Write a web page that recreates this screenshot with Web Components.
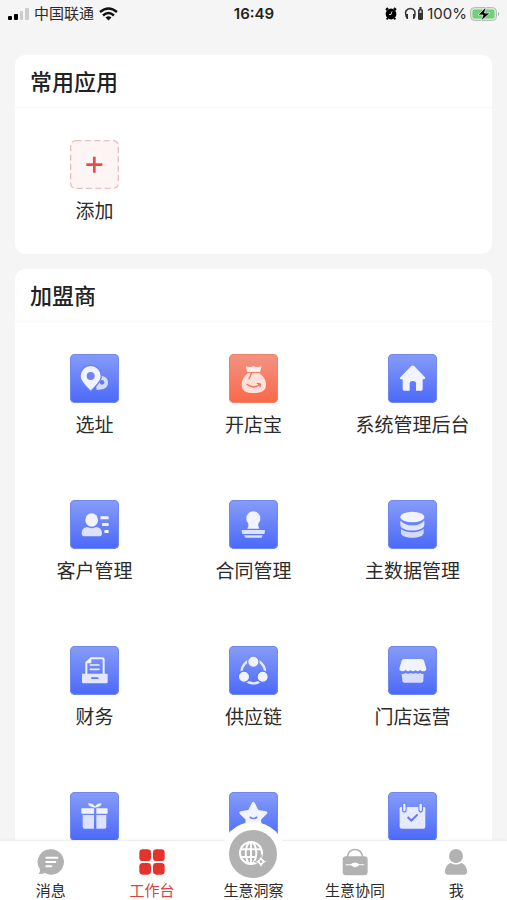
<!DOCTYPE html>
<html lang="zh-CN">
<head>
<meta charset="utf-8">
<meta name="viewport" content="width=device-width, initial-scale=1">
<title>工作台</title>
<style>
    html, body {
        height: 100%;
        margin: 0;
    }
    body {
        background: #f5f5f5;
        color: #2b2b2b;
        font-family: "Noto Sans CJK SC", sans-serif;
    }
</style>
</head>
<body>
<wb-screen>
    <wb-status-bar slot="status" carrier="中国联通" time="16:49" battery="100%"></wb-status-bar>

    <wb-card heading="常用应用">
        <wb-app icon="add" label="添加"></wb-app>
    </wb-card>

    <wb-card heading="加盟商">
        <wb-app icon="site" label="选址"></wb-app>
        <wb-app icon="bag" label="开店宝" tone="coral"></wb-app>
        <wb-app icon="home" label="系统管理后台"></wb-app>
        <wb-app icon="customer" label="客户管理"></wb-app>
        <wb-app icon="stamp" label="合同管理"></wb-app>
        <wb-app icon="data" label="主数据管理"></wb-app>
        <wb-app icon="finance" label="财务"></wb-app>
        <wb-app icon="chain" label="供应链"></wb-app>
        <wb-app icon="store" label="门店运营"></wb-app>
        <wb-app icon="gift"></wb-app>
        <wb-app icon="star"></wb-app>
        <wb-app icon="calendar"></wb-app>
    </wb-card>

    <wb-tab-bar slot="tabs">
        <wb-tab icon="message" label="消息"></wb-tab>
        <wb-tab icon="grid" label="工作台" active></wb-tab>
        <wb-tab icon="globe" label="生意洞察" raised></wb-tab>
        <wb-tab icon="work" label="生意协同"></wb-tab>
        <wb-tab icon="user" label="我"></wb-tab>
    </wb-tab-bar>
</wb-screen>

<script>
// app glyphs, drawn on a 147 unit tile
const appIcons = {
    add: `
        <path d="M73 50V98M49 74H97" fill="none" stroke="#df4f4b" stroke-width="8"/>`,
    site: `
        <path d="M80 108L98 106C120 101 120 69 96 66C86 66 77 74 77 84Z" opacity=".8"/>
        <circle cx="96" cy="85" r="7" fill="#6179f3"/>
        <path d="M62 112C50 99 30 85 30 66A32 32 0 0 1 94 66C94 85 74 99 62 112Z" stroke="#6a80f4" stroke-width="4"/>
        <circle cx="62" cy="66" r="12" fill="#6f84f5"/>`,
    bag: `
        <path d="M50 37Q62 41 74 37Q86 41 98 37L93 54H55Z"/>
        <path d="M57 57H90C103 66 111 78 111 92C111 110 98 117 74 117C50 117 38 110 38 92C38 78 45 66 57 57Z" opacity=".88"/>
        <path d="M67 57Q65 67 60 74M54 91Q74 107 93 91M85 88L94 90L93 98" fill="none" stroke="#ef705b" stroke-width="4" stroke-linecap="round"/>`,
    home: `
        <path d="M69 37Q74 32 79 37L111 70Q114 75 108 76H104V106Q104 110 100 110H84V88Q84 81 74 81Q65 81 65 88V110H48Q44 110 44 106V76H39Q33 75 37 70Z"/>`,
    customer: `
        <ellipse cx="65" cy="60" rx="19" ry="20"/>
        <path d="M51 81Q65 88 79 81Q96 83 96 100Q96 109 89 109H42Q35 109 35 100Q35 83 51 81Z" opacity=".85"/>
        <rect x="91" y="49" width="25" height="9" rx="2"/>
        <rect x="96" y="69" width="20" height="9" rx="2"/>
        <rect x="103" y="90" width="13" height="9" rx="2"/>`,
    stamp: `
        <path d="M73 34A21 21 0 0 1 94 56C94 67 86 67 88 78L91 86H55L58 78C60 67 52 67 52 56A21 21 0 0 1 73 34Z"/>
        <path d="M41 90H105Q109 90 108 94L106 102H40L38 94Q37 90 41 90ZM45 106H101L98 113H49Z" opacity=".85"/>`,
    data: `
        <ellipse cx="73" cy="51" rx="36" ry="16"/>
        <path d="M37 62Q51 76 73 76T109 62V75C109 97 37 97 37 75Z" opacity=".88"/>
        <path d="M39 87Q53 97 73 97T107 87V99C107 118 39 118 39 99Z" opacity=".8"/>`,
    finance: `
        <path d="M49 84V50L63 37H96Q101 37 101 42V84" fill="none" stroke="#edf0ff" stroke-width="6"/>
        <path d="M49 52H64V37Z"/>
        <path d="M61 57H87M61 70H87" stroke="#edf0ff" stroke-width="5" stroke-linecap="round"/>
        <path d="M36 83H113V108Q113 112 109 112H40Q36 112 36 108Z" opacity=".9"/>
        <rect x="63" y="94" width="23" height="5" rx="2" fill="#6079f5"/>`,
    chain: `
        <circle cx="73" cy="77" r="35" fill="none" stroke="#e5eaff" stroke-width="7"/>
        <circle cx="73" cy="47" r="17" stroke="#7489f6" stroke-width="4"/>
        <circle cx="45" cy="92" r="17" stroke="#5f79f6" stroke-width="4"/>
        <circle cx="101" cy="92" r="17" stroke="#5f79f6" stroke-width="4"/>`,
    store: `
        <path d="M47 39H101Q106 39 108 44L115 68Q114 76 105 76Q100 76 96 71Q90 80 83 72Q75 80 67 72Q60 80 53 71Q47 77 40 75Q33 74 34 68L41 44Q43 39 47 39Z"/>
        <path d="M41 83Q47 85 53 81Q61 86 68 81Q76 86 83 81Q91 86 97 81Q103 85 107 83L106 105Q105 110 100 110H49Q44 110 43 105Z" opacity=".82"/>`,
    gift: `
        <path d="M75 47Q56 45 54 34Q69 33 75 44Q81 33 95 34Q93 45 75 47Z"/>
        <path d="M36 49H72V65H36Q34 65 34 63V51Q34 49 36 49ZM79 49H111Q113 49 113 51V63Q113 65 111 65H79Z"/>
        <path d="M38 69H72V110H44Q38 110 38 104ZM79 69H109V104Q109 110 103 110H79Z" opacity=".85"/>`,
    star: `
        <path d="M69 32Q73 26 77 32L88 54L111 58Q118 60 113 66L96 83L99 108Q98 113 92 111L73 101L54 111Q48 113 47 108L50 83L33 66Q28 60 35 58L58 54Z"/>
        <path d="M62 75Q73 84 85 75" fill="none" stroke="#7188f5" stroke-width="5"/>`,
    calendar: `
        <path d="M39 45H108Q112 45 112 49V104Q112 110 106 110H41Q35 110 35 104V49Q35 45 39 45Z" opacity=".92"/>
        <path d="M49 40V55M98 40V55" stroke="#6d83f4" stroke-width="14" stroke-linecap="round"/>
        <path d="M49 39V54M98 39V54" stroke="#eef1ff" stroke-width="7" stroke-linecap="round"/>
        <path d="M59 75L70 86L89 67" fill="none" stroke="#5f78f5" stroke-width="6"/>`
};

// tab glyphs, drawn on an 84 unit box
const tabIcons = {
    message: `
        <path d="M42 4A38 38 0 1 1 24 75Q16 79 5 78Q10 72 9 64A38 38 0 0 1 42 4Z"/>
        <path d="M28 29H61M28 42H55M28 55H43" stroke="#fff" stroke-width="6" stroke-linecap="round"/>`,
    grid: `
        <rect x="4" y="4" width="35" height="35" rx="10"/>
        <rect x="45" y="4" width="35" height="35" rx="10"/>
        <rect x="4" y="45" width="35" height="35" rx="10"/>
        <rect x="45" y="45" width="35" height="35" rx="10"/>`,
    globe: `
        <g fill="none" stroke="#fff" stroke-width="6">
            <circle cx="36" cy="39" r="33"/>
            <ellipse cx="36" cy="39" rx="16" ry="33"/>
            <path d="M36 6V72M5 28H67M5 51H50"/>
        </g>
        <path d="M66 43Q69 62 86 65Q69 68 66 87Q63 68 46 65Q63 62 66 43Z" fill="#fff" stroke="#b2b2b2" stroke-width="3"/>
        <circle cx="66" cy="65" r="4"/>`,
    work: `
        <path d="M19 27C21 -3 63 -3 65 27" fill="none" stroke="currentColor" stroke-width="5"/>
        <rect x="5" y="25" width="75" height="57" rx="10"/>
        <path d="M14 49H29Q42 38 55 49H70V52H55Q42 63 29 52H14Z" fill="#fff"/>`,
    user: `
        <circle cx="42" cy="24" r="21"/>
        <path d="M26 45Q42 54 58 45Q75 51 75 71Q75 80 66 80H18Q9 80 9 71Q9 51 26 45Z"/>`
};

customElements.define('wb-screen', class extends HTMLElement {
    constructor() {
        super();
        this.attachShadow({mode: 'open'}).innerHTML = `
            <style>
            :host {
                display: flex;
                flex-direction: column;
                height: 100%;
            }
            main {
                display: flex;
                flex: 1;
                flex-direction: column;
                gap: 15px;
                min-height: 0;
                padding: 28px 15px 0;
                overflow-y: auto;
                scrollbar-width: none;
            }
            </style>
            <slot name="status"></slot>
            <main><slot></slot></main>
            <slot name="tabs"></slot>
        `;
    }
});

customElements.define('wb-status-bar', class extends HTMLElement {
    constructor() {
        super();
        this.attachShadow({mode: 'open'}).innerHTML = `
            <style>
            :host {
                display: grid;
                grid-template-columns: 1fr auto 1fr;
                align-items: center;
                height: 27px;
                padding: 0 7px 0 8px;
                font-family: Inter, "Noto Sans CJK SC", sans-serif;
                font-size: 15px;
                line-height: 20px;
            }
            div {
                display: flex;
                align-items: center;
                gap: 5px;
            }
            .right {
                justify-content: flex-end;
                gap: 3px;
            }
            time {
                color: #222;
                font-weight: 600;
            }
            svg {
                display: block;
                flex: none;
            }
            .alarm {
                margin-right: 4px;
            }
            </style>
            <div>
                <svg width="21" height="14" viewBox="0 0 21 14" aria-hidden="true">
                    <rect x="0" y="9" width="4" height="4" rx="1"/>
                    <rect x="6" y="7" width="4" height="6" rx="1"/>
                    <rect x="12" y="4" width="3" height="9" rx="1" fill="#ccc"/>
                    <rect x="17" y="1" width="4" height="12" rx="1" fill="#ccc"/>
                </svg>
                <span>${this.getAttribute('carrier')}</span>
                <svg width="19" height="14" viewBox="0 0 19 14" fill="none" stroke="#111" stroke-width="2.4" aria-hidden="true">
                    <path d="M1 5Q9.5 -2 18 5M4 8.5Q9.5 3.6 15 8.5"/>
                    <path d="M6.5 10.5Q9.5 8 12.5 10.5L9.5 13.5Z" fill="#111" stroke="none"/>
                </svg>
            </div>
            <time>${this.getAttribute('time')}</time>
            <div class="right">
                <svg class="alarm" width="12" height="13" viewBox="0 0 12 13" aria-hidden="true">
                    <circle cx="6" cy="7" r="5.4"/>
                    <path d="M1 3L3 1M11 3L9 1M2.500 11L2 12.500M9.500 11L10 12.500" stroke="#000" stroke-width="2"/>
                    <path d="M7 4.500L6 7.500H4" fill="none" stroke="#ddd"/>
                </svg>
                <svg width="20" height="13" viewBox="0 0 20 13" aria-hidden="true">
                    <path d="M3 10.5C-.5 4.5 3 1.5 6.5 1.5S12.500 4.500 10 10.500" fill="none" stroke="#333" stroke-width="1.5"/>
                    <path d="M2 7H4V12H3Q1 11 2 7ZM11 7H9V12H10Q12 11 11 7Z" fill="#333"/>
                    <rect x="14" y="2" width="5" height="11" rx="1.5" fill="#333"/>
                    <rect x="15.5" y="0" width="2" height="2" fill="#333"/>
                    <rect x="15.5" y="3.5" width="2" height="2.5" fill="#ccc"/>
                </svg>
                <span>${this.getAttribute('battery')}</span>
                <svg width="30" height="16" viewBox="0 0 30 16" aria-hidden="true">
                    <rect x=".5" y="1.5" width="26" height="13" rx="4" fill="#d5e6d6" stroke="#b3bfb4"/>
                    <rect x="2.5" y="3.5" width="22" height="9" rx="2" fill="#6fd07b"/>
                    <path d="M28 6Q30.500 8 28 10Z" fill="#a5b3a6"/>
                    <path d="M16 1L8 9H13L11 15L20 7H14.500Z" stroke="#e2f1e3" stroke-width=".8"/>
                </svg>
            </div>
        `;
    }
});

customElements.define('wb-card', class extends HTMLElement {
    constructor() {
        super();
        this.attachShadow({mode: 'open'}).innerHTML = `
            <style>
            :host {
                display: block;
                flex: none;
                border-radius: 10px;
                background: #fff;
            }
            h2 {
                box-sizing: border-box;
                height: 53px;
                margin: 0;
                padding: 0 15px;
                border-bottom: 1px solid #f8f8f8;
                color: #222;
                font-size: 22px;
                font-weight: 500;
                line-height: 50px;
            }
            .apps {
                display: grid;
                grid-template-columns: repeat(3, 1fr);
            }
            </style>
            <section>
                <h2>${this.getAttribute('heading')}</h2>
                <div class="apps"><slot></slot></div>
            </section>
        `;
    }
});

customElements.define('wb-app', class extends HTMLElement {
    constructor() {
        super();
        const icon = this.getAttribute('icon');
        const label = this.getAttribute('label');
        this.attachShadow({mode: 'open'}).innerHTML = `
            <style>
            :host {
                display: block;
                --tile: linear-gradient(#879cf8, #4a69f8);
                --edge: #7188ee;
            }
            :host([tone="coral"]) {
                --tile: linear-gradient(#f39382, #fa6849);
                --edge: #ef8269;
            }
            button {
                display: flex;
                flex-direction: column;
                align-items: center;
                gap: 7px;
                box-sizing: border-box;
                width: 100%;
                height: 146px;
                padding: 32px 0 0;
                border: 0;
                background: none;
                color: inherit;
                font: inherit;
                font-size: 19px;
                line-height: 28px;
                white-space: nowrap;
            }
            svg {
                display: block;
                box-sizing: border-box;
                width: 49px;
                height: 49px;
                border-radius: 5px;
                background: var(--tile);
                box-shadow: inset 0 0 0 1px var(--edge);
                fill: #f1f3ff;
            }
            :host([tone="coral"]) svg {
                fill: #fff0eb;
            }
            :host([icon="add"]) svg {
                background: #fdf4f4;
                box-shadow: none;
            }
            </style>
            <button type="button">
                <svg viewBox="0 0 147 147" aria-hidden="true">
                    ${icon === 'add' ? '<rect x="2" y="2" width="143" height="143" rx="15" fill="none" stroke="#e9bfc2" stroke-width="4" stroke-dasharray="18 10"/>' : ''}
                    ${appIcons[icon]}
                </svg>
                ${label ? `<span>${label}</span>` : ''}
            </button>
        `;
    }
});

customElements.define('wb-tab-bar', class extends HTMLElement {
    constructor() {
        super();
        this.attachShadow({mode: 'open'}).innerHTML = `
            <style>
            :host {
                display: block;
                position: relative;
                border-top: 1px solid #eee;
                background: #fff;
                box-shadow: 0 -1px 2px rgba(0, 0, 0, .03);
            }
            nav {
                display: grid;
                grid-template-columns: repeat(5, 1fr);
            }
            </style>
            <nav><slot></slot></nav>
        `;
    }
});

customElements.define('wb-tab', class extends HTMLElement {
    constructor() {
        super();
        this.attachShadow({mode: 'open'}).innerHTML = `
            <style>
            :host {
                display: block;
            }
            button {
                display: flex;
                flex-direction: column;
                align-items: center;
                justify-content: flex-end;
                gap: 4px;
                width: 100%;
                height: 59px;
                padding: 0;
                border: 0;
                background: none;
                color: inherit;
                font: inherit;
                font-size: 15px;
                line-height: 20px;
                white-space: nowrap;
            }
            .icon {
                display: flex;
                align-items: center;
                justify-content: center;
                color: #b2b2b2;
            }
            svg {
                display: block;
                width: 28px;
                height: 28px;
                fill: currentColor;
            }
            :host([active]) button {
                color: #d9433f;
            }
            :host([active]) .icon {
                color: #e5322d;
            }
            /* the middle tab is a disc that rises out of the bar */
            :host([raised]) button {
                gap: 2px;
            }
            :host([raised]) .icon {
                flex: none;
                width: 48px;
                height: 48px;
                border-radius: 50%;
                background: #b2b2b2;
                box-shadow: 0 0 0 8px #fff;
            }
            </style>
            <button type="button">
                <span class="icon">
                    <svg viewBox="0 0 84 84" aria-hidden="true">${tabIcons[this.getAttribute('icon')]}</svg>
                </span>
                <span>${this.getAttribute('label')}</span>
            </button>
        `;
    }
});
</script>
</body>
</html>
